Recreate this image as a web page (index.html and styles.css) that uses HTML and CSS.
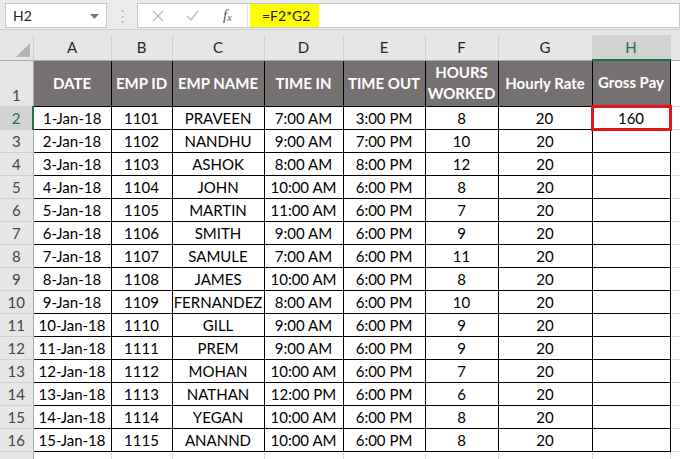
FILE: index.html
```html
<!DOCTYPE html>
<html>
<head>
<meta charset="utf-8">
<link rel="stylesheet" href="styles.css">
</head>
<body>
<div class="toolbar">
  <div class="namebox"><span>H2</span><svg class="caret" width="9" height="5" viewBox="0 0 9 5"><path d="M0 0h9L4.5 5z" fill="#777"/></svg></div>
  <div class="dots">⋮</div>
  <div class="fxbox">
    <svg class="ico" width="12" height="12" viewBox="0 0 12 12"><path d="M1 1l10 10M11 1L1 11" stroke="#bbb" stroke-width="1.3" fill="none"/></svg>
    <svg class="ico" width="13" height="11" viewBox="0 0 13 11"><path d="M1 6l4 4 7-9" stroke="#bbb" stroke-width="1.4" fill="none"/></svg>
    <span class="fx">f<sub>x</sub></span>
  </div>
  <div class="formula"><span class="hl">=F2*G2</span></div>
</div>
<div class="gap"></div>
<table class="sheet">
  <colgroup>
    <col class="c0"><col class="ca"><col class="cb"><col class="cc"><col class="cd"><col class="ce"><col class="cf"><col class="cg"><col class="ch"><col class="cx">
  </colgroup>
  <tr class="colhead">
    <th class="corner"><div class="tri"></div></th>
    <th>A</th><th>B</th><th>C</th><th>D</th><th>E</th><th>F</th><th>G</th><th class="selcol">H</th><th class="blank"></th>
  </tr>
  <tr class="hdr">
    <th class="rn rn1">1</th>
    <td>DATE</td><td>EMP ID</td><td>EMP NAME</td><td>TIME IN</td><td>TIME OUT</td><td>HOURS<br>WORKED</td><td>Hourly Rate</td><td>Gross Pay</td><td class="out"></td>
  </tr>
  <tr><th class="rn selrow">2</th><td>1-Jan-18</td><td>1101</td><td>PRAVEEN</td><td>7:00 AM</td><td>3:00 PM</td><td>8</td><td>20</td><td class="sel">160</td><td class="out"></td></tr>
  <tr><th class="rn">3</th><td>2-Jan-18</td><td>1102</td><td>NANDHU</td><td>9:00 AM</td><td>7:00 PM</td><td>10</td><td>20</td><td></td><td class="out"></td></tr>
  <tr><th class="rn">4</th><td>3-Jan-18</td><td>1103</td><td>ASHOK</td><td>8:00 AM</td><td>8:00 PM</td><td>12</td><td>20</td><td></td><td class="out"></td></tr>
  <tr><th class="rn">5</th><td>4-Jan-18</td><td>1104</td><td>JOHN</td><td>10:00 AM</td><td>6:00 PM</td><td>8</td><td>20</td><td></td><td class="out"></td></tr>
  <tr><th class="rn">6</th><td>5-Jan-18</td><td>1105</td><td>MARTIN</td><td>11:00 AM</td><td>6:00 PM</td><td>7</td><td>20</td><td></td><td class="out"></td></tr>
  <tr><th class="rn">7</th><td>6-Jan-18</td><td>1106</td><td>SMITH</td><td>9:00 AM</td><td>6:00 PM</td><td>9</td><td>20</td><td></td><td class="out"></td></tr>
  <tr><th class="rn">8</th><td>7-Jan-18</td><td>1107</td><td>SAMULE</td><td>7:00 AM</td><td>6:00 PM</td><td>11</td><td>20</td><td></td><td class="out"></td></tr>
  <tr><th class="rn">9</th><td>8-Jan-18</td><td>1108</td><td>JAMES</td><td>10:00 AM</td><td>6:00 PM</td><td>8</td><td>20</td><td></td><td class="out"></td></tr>
  <tr><th class="rn">10</th><td>9-Jan-18</td><td>1109</td><td>FERNANDEZ</td><td>8:00 AM</td><td>6:00 PM</td><td>10</td><td>20</td><td></td><td class="out"></td></tr>
  <tr><th class="rn">11</th><td>10-Jan-18</td><td>1110</td><td>GILL</td><td>9:00 AM</td><td>6:00 PM</td><td>9</td><td>20</td><td></td><td class="out"></td></tr>
  <tr><th class="rn">12</th><td>11-Jan-18</td><td>1111</td><td>PREM</td><td>9:00 AM</td><td>6:00 PM</td><td>9</td><td>20</td><td></td><td class="out"></td></tr>
  <tr><th class="rn">13</th><td>12-Jan-18</td><td>1112</td><td>MOHAN</td><td>10:00 AM</td><td>6:00 PM</td><td>7</td><td>20</td><td></td><td class="out"></td></tr>
  <tr><th class="rn">14</th><td>13-Jan-18</td><td>1113</td><td>NATHAN</td><td>12:00 PM</td><td>6:00 PM</td><td>6</td><td>20</td><td></td><td class="out"></td></tr>
  <tr><th class="rn">15</th><td>14-Jan-18</td><td>1114</td><td>YEGAN</td><td>10:00 AM</td><td>6:00 PM</td><td>8</td><td>20</td><td></td><td class="out"></td></tr>
  <tr><th class="rn">16</th><td>15-Jan-18</td><td>1115</td><td>ANANND</td><td>10:00 AM</td><td>6:00 PM</td><td>8</td><td>20</td><td></td><td class="out"></td></tr>
  <tr class="empty"><th class="rn"></th><td class="out"></td><td class="out"></td><td class="out"></td><td class="out"></td><td class="out"></td><td class="out"></td><td class="out"></td><td class="out"></td><td class="out"></td></tr>
</table>
</body>
</html>
```

FILE: styles.css
```css
* { box-sizing: border-box; }
html, body { margin: 0; padding: 0; }
body {
  width: 680px;
  height: 459px;
  overflow: hidden;
  background: #e6e6e6;
  font-family: Lato, "Open Sans", sans-serif;
}
.toolbar {
  display: flex;
  align-items: flex-start;
  height: 30px;
  padding-top: 3px;
  border-bottom: 1px solid #cfcfcf;
  background: #ebebeb;
}
.namebox {
  width: 102px;
  height: 25px;
  margin-left: 5px;
  background: #fff;
  border: 1px solid #c6c6c6;
  display: flex;
  align-items: center;
  justify-content: space-between;
  padding: 0 7px 0 7px;
  font-size: 14px;
  color: #222;
}
.caret { margin-top: 1px; }
.dots {
  width: 30px;
  text-align: center;
  color: #b8b8b8;
  font-size: 15px;
  line-height: 25px;
}
.fxbox {
  width: 110px;
  height: 25px;
  background: #fff;
  border: 1px solid #c6c6c6;
  border-right: none;
  display: flex;
  align-items: center;
  padding-left: 14px;
  gap: 22px;
}
.fx {
  font-family: "Liberation Serif", serif;
  font-style: italic;
  font-size: 15px;
  color: #555;
  margin-left: 2px;
}
.fx sub { font-size: 10px; vertical-align: -1px; }
.formula {
  flex: 1;
  height: 25px;
  background: #fff;
  border: 1px solid #c6c6c6;
  border-left: 1px solid #e0e0e0;
  padding-left: 2px;
}
.hl {
  display: inline-block;
  height: 23px;
  width: 69px;
  background: #ffff00;
  font-size: 14px;
  line-height: 23px;
  padding-left: 12px;
  color: #222;
}
.gap { height: 5px; }
.sheet {
  border-collapse: collapse;
  table-layout: fixed;
  width: 680px;
}
.c0 { width: 33px; }
.ca { width: 78px; }
.cb { width: 61px; }
.cc { width: 92px; }
.cd { width: 79px; }
.ce { width: 82px; }
.cf { width: 73px; }
.cg { width: 94px; }
.ch { width: 78px; }
.cx { width: 10px; }
.sheet th, .sheet td {
  padding: 0;
  overflow: hidden;
  white-space: nowrap;
}
.colhead th {
  height: 25px;
  background: #e6e6e6;
  border-left: 1px solid #d0d0d0;
  border-right: 1px solid #d0d0d0;
  border-bottom: 1px solid #ababab;
  font-weight: normal;
  font-size: 15px;
  color: #262626;
  text-align: center;
  vertical-align: middle;
}
.colhead th.corner { border-left: none; position: relative; }
.tri {
  position: absolute;
  right: 3px;
  bottom: 3px;
  width: 0; height: 0;
  border-left: 14px solid transparent;
  border-bottom: 14px solid #b4b4b4;
}
.colhead th.selcol {
  background: #d2d2d2;
  color: #217346;
  border-bottom: 2px solid #217346;
}
.colhead th.blank { border-right: none; }
.sheet tr { height: 23px; }
.sheet td {
  height: 23px;
  border: 1px solid #000;
  background: #fff;
  text-align: center;
  font-size: 15px;
  color: #000;
  vertical-align: middle;
  line-height: 20px;
}
.sheet td.out {
  border: none;
  border-left: 1px solid #000;
  border-bottom: 1px solid #dadada;
  background: #fff;
}
.empty td.out { border-left: 1px solid #dadada; border-top: 1px solid #000; }
.empty td.out:first-of-type { border-left: none; }
.hdr td {
  height: 46px;
  background: #767171;
  color: #fff;
  font-weight: bold;
  font-size: 15px;
  line-height: 21px;
  white-space: normal;
}
.hdr td.out { background: #fff; }
.rn {
  background: #e6e6e6;
  border-bottom: 1px solid #d0d0d0;
  border-right: 1px solid #ababab;
  font-weight: normal;
  font-size: 15px;
  color: #444;
  text-align: center;
  vertical-align: middle;
}
.rn1 { vertical-align: bottom; padding-bottom: 2px !important; }
.rn.selrow {
  background: #d2d2d2;
  color: #217346;
  border-right: 2px solid #217346;
}
.sheet td.sel {
  border: 3px solid #e3141c;
}
```
